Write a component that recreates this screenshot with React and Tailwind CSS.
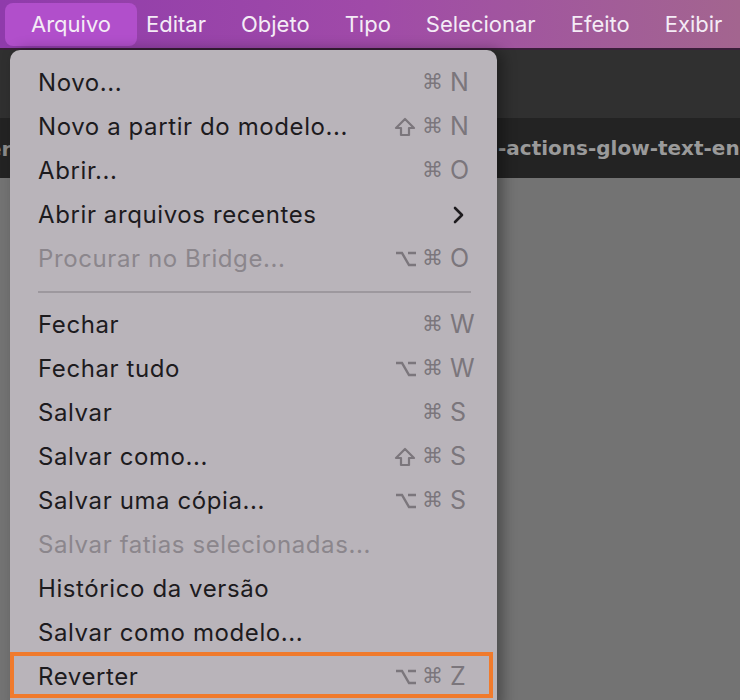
import React from "react";

const menuBar = ["Arquivo", "Editar", "Objeto", "Tipo", "Selecionar", "Efeito", "Exibir"];

const items = [
  { label: "Novo...", mods: "⌘", key: "N" },
  { label: "Novo a partir do modelo...", mods: "⇧⌘", key: "N" },
  { label: "Abrir...", mods: "⌘", key: "O" },
  { label: "Abrir arquivos recentes", submenu: true },
  { label: "Procurar no Bridge...", mods: "⌥⌘", key: "O", disabled: true },
  { separator: true },
  { label: "Fechar", mods: "⌘", key: "W" },
  { label: "Fechar tudo", mods: "⌥⌘", key: "W" },
  { label: "Salvar", mods: "⌘", key: "S" },
  { label: "Salvar como...", mods: "⇧⌘", key: "S" },
  { label: "Salvar uma cópia...", mods: "⌥⌘", key: "S" },
  { label: "Salvar fatias selecionadas...", disabled: true },
  { label: "Histórico da versão" },
  { label: "Salvar como modelo..." },
  { label: "Reverter", mods: "⌥⌘", key: "Z" },
];

const ShiftIcon = () => (
  <svg width="22" height="20" viewBox="0 0 22 20" className="mr-[4px]">
    <path
      d="M11 2 L20 11 L15 11 L15 18 L7 18 L7 11 L2 11 Z"
      fill="none"
      stroke="#7b767c"
      strokeWidth="2.2"
      strokeLinejoin="round"
    />
  </svg>
);

const OptionIcon = () => (
  <svg width="22" height="18" viewBox="0 0 22 18" className="mr-[3px]">
    <path
      d="M1 3 H7 L14 15 H21 M13 3 H21"
      fill="none"
      stroke="#7b767c"
      strokeWidth="2.4"
    />
  </svg>
);

const Shortcut = ({ mods, keyName }) => (
  <div className="flex items-center text-[#7b767c]">
    {mods.split("").map((m, i) =>
      m === "⇧" ? (
        <ShiftIcon key={i} />
      ) : m === "⌥" ? (
        <OptionIcon key={i} />
      ) : (
        <span key={i} className="font-['DejaVu_Sans',sans-serif] text-[21px] ml-[2px]">
          {m}
        </span>
      )
    )}
    <span className="w-[27px] pl-[7px] text-[25px]">{keyName}</span>
  </div>
);

const MenuItem = ({ item }) => {
  if (item.separator) {
    return (
      <div className="h-[22px] flex items-center pl-[28px] pr-[26px]">
        <div className="h-[2px] w-full bg-[#9d989e]" />
      </div>
    );
  }
  return (
    <div
      className={
        "h-[44px] flex items-center justify-between pl-[28px] pr-[27px] " +
        (item.disabled ? "text-[#8b868c]" : "text-[#1d1b1e]")
      }
    >
      <span className="text-[24px] tracking-[0.6px]">{item.label}</span>
      {item.submenu && (
        <svg width="14" height="20" viewBox="0 0 14 20" className="mr-[4px]">
          <path d="M3 3 L10 10 L3 17" fill="none" stroke="#1d1b1e" strokeWidth="2.6" strokeLinecap="round" strokeLinejoin="round" />
        </svg>
      )}
      {item.mods && <Shortcut mods={item.mods} keyName={item.key} />}
    </div>
  );
};

export default function App() {
  return (
    <div className="relative w-[740px] h-[700px] overflow-hidden bg-[#737373] font-['Inter','Liberation_Sans',sans-serif]">
      {/* menu bar */}
      <div className="h-[50px] flex items-center pl-[5px] bg-gradient-to-r from-[#8f3bab] via-[#a04aa8] to-[#a3658f] border-b-2 border-[#3a1f3a]">
        {menuBar.map((m, i) => (
          <div
            key={m}
            className={
              "h-[43px] flex items-center px-[26px] text-[22px] text-[#f4ecf6] rounded-[8px] mr-[-17px] " +
              (i === 0 ? "bg-[#b14fcb]" : "")
            }
          >
            {m}
          </div>
        ))}
      </div>

      {/* app chrome behind menu */}
      <div className="h-[68px] bg-[#303030]" />
      <div className="h-[60px] bg-[#232323] flex items-center pl-[498px] whitespace-nowrap">
        <span className="font-['DejaVu_Sans',sans-serif] font-bold text-[20px] text-[#9a9a9a]">
          -actions-glow-text-en
        </span>
      </div>
      <div className="absolute left-[-12px] top-[134px] font-['DejaVu_Sans',sans-serif] font-bold text-[20px] text-[#8a8a8a]">
        er
      </div>

      {/* dropdown */}
      <div className="absolute left-[10px] top-[50px] w-[487px] h-[660px] bg-[#b9b4ba] rounded-t-[10px] pt-[11px] shadow-[6px_0_14px_rgba(0,0,0,0.35)]">
        {items.map((item, i) => (
          <MenuItem key={i} item={item} />
        ))}
        {/* orange highlight around Reverter */}
        <div className="absolute left-0 top-[602px] w-[483px] h-[46px] border-[4px] border-[#f07a2c]" />
      </div>
    </div>
  );
}
